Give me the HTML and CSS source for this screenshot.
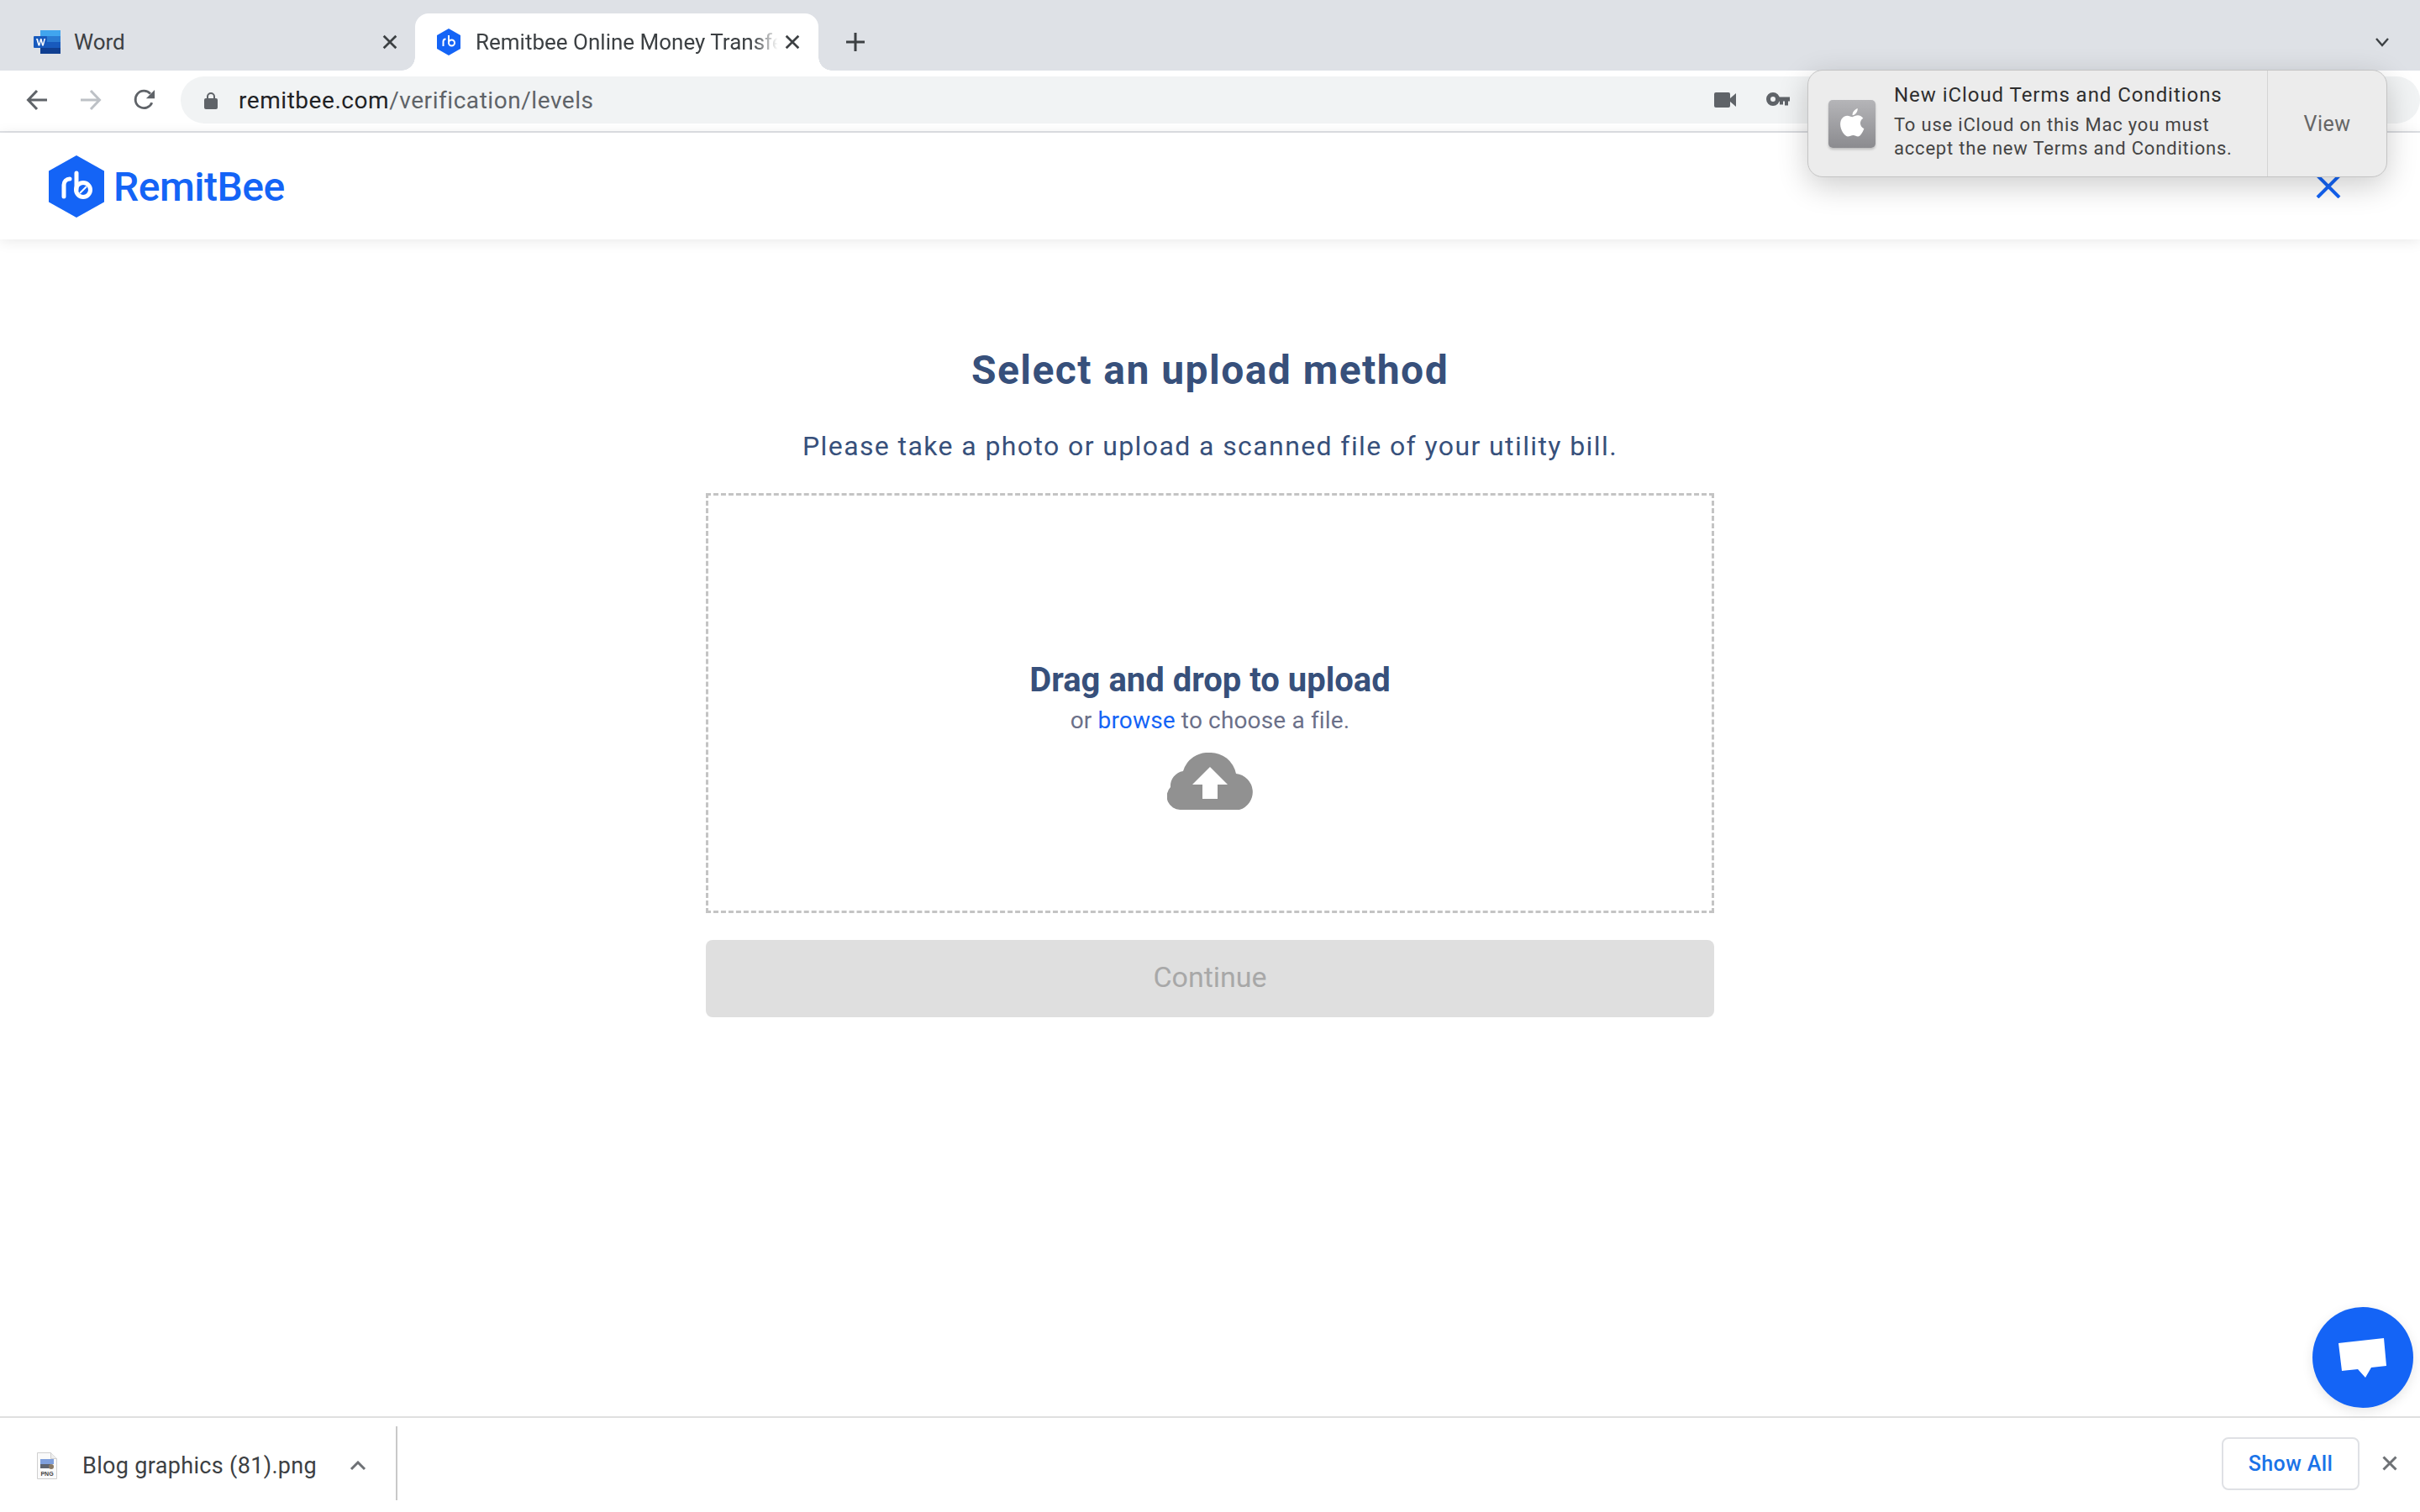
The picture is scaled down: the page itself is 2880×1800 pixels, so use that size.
FILE: index.html
```html
<!DOCTYPE html>
<html lang="en">
<head>
<meta charset="utf-8">
<title>Remitbee</title>
<link rel="stylesheet" href="styles.css">
</head>
<body>
<div class="tabstrip">
  <div class="tab inactive">
    <svg class="favicon word" viewBox="0 0 32 28"><rect x="8" width="24" height="7" fill="#41a5ee"/><rect x="8" y="7" width="24" height="7" fill="#2b7cd3"/><rect x="8" y="14" width="24" height="7" fill="#185abd"/><rect x="8" y="21" width="24" height="7" fill="#103f91"/><rect y="7" width="16" height="14" rx="1" fill="#185abd"/><path d="M3 10h2l1.500 6 1.500-6h1.500l1.500 6 1.500-6h1.500l-2.200 8.500h-1.700l-1.400-5.500-1.400 5.500h-1.700z" fill="#fff"/></svg>
    <span class="tab-title">Word</span>
    <svg class="tab-x" viewBox="0 0 16 16"><path d="M1.500 1.500l13 13M14.500 1.500l-13 13" stroke="#3c4043" stroke-width="2.400" fill="none"/></svg>
  </div>
  <div class="tab active">
    <svg class="favicon rb" viewBox="0 0 28 32"><path d="M14 0l14 8v16l-14 8L0 24V8z" fill="#1464f6"/><path d="M7.500 21v-5.500a3 3 0 0 1 3-3" stroke="#fff" stroke-width="2" fill="none"/><path d="M14 8v9" stroke="#fff" stroke-width="2" fill="none"/><circle cx="17.500" cy="17" r="3.500" stroke="#fff" stroke-width="2" fill="none"/></svg>
    <span class="tab-title fade">Remitbee Online Money Transfe</span>
    <svg class="tab-x" viewBox="0 0 16 16"><path d="M1.500 1.500l13 13M14.500 1.500l-13 13" stroke="#3c4043" stroke-width="2.400" fill="none"/></svg>
  </div>
  <svg class="plus" viewBox="0 0 24 24"><path d="M12 1v22M1 12h22" stroke="#3c4043" stroke-width="3" fill="none"/></svg>
  <svg class="tab-menu" viewBox="0 0 18 12"><path d="M2 2l7 8 7-8" stroke="#3c4043" stroke-width="2.400" fill="none"/></svg>
</div>

<div class="toolbar">
  <svg class="nav" viewBox="0 0 26 26"><path d="M25 13H3M13 2L2.500 13 13 24" stroke="#5f6368" stroke-width="3" fill="none"/></svg>
  <svg class="nav" viewBox="0 0 26 26"><path d="M1 13h22M13 2l10.500 11L13 24" stroke="#bdc1c6" stroke-width="3" fill="none"/></svg>
  <svg class="nav" viewBox="0 0 28 28"><path d="M23.500 17.500A11 11 0 1 1 21.500 6" stroke="#5f6368" stroke-width="3" fill="none"/><path d="M27 1v11H16z" fill="#5f6368"/></svg>
  <div class="omnibox">
    <svg class="lock" viewBox="0 0 16 21"><path d="M4 9V6a4 4 0 0 1 8 0v3" stroke="#5f6368" stroke-width="2" fill="none"/><rect y="8" width="16" height="13" rx="2" fill="#5f6368"/></svg>
    <span class="url"><span class="host">remitbee.com</span>/verification/levels</span>
    <svg class="omni-cam" viewBox="0 0 26 20"><rect y="1" width="19" height="18" rx="2" fill="#5f6368"/><path d="M19 8l7-6v16l-7-6z" fill="#5f6368"/></svg>
    <svg class="omni-key" viewBox="0 0 28 20"><circle cx="8" cy="9" r="5.500" fill="none" stroke="#5f6368" stroke-width="5"/><path d="M13 6.500h15v5h-2v5h-4v-5h-2v4h-4v-4h-3z" fill="#5f6368"/></svg>
  </div>
</div>

<header class="site-header">
  <div class="logo">
    <svg class="logo-mark" viewBox="0 0 66 74"><path d="M33 0l33 18.500v37L33 74 0 55.500v-37z" fill="#1464f6"/><path d="M18 49V35a7 7 0 0 1 7-7" stroke="#fff" stroke-width="5" stroke-linecap="round" fill="none"/><path d="M33 21v20" stroke="#fff" stroke-width="5" stroke-linecap="round" fill="none"/><circle cx="41" cy="41" r="8.500" stroke="#fff" stroke-width="5" fill="none"/><path d="M37 45l8-8" stroke="#fff" stroke-width="2" fill="none"/></svg>
    <span class="logo-text">RemitBee</span>
  </div>
  <svg class="site-close" viewBox="0 0 30 28"><path d="M2 1l26 26M28 1L2 27" stroke="#1464f6" stroke-width="4" fill="none"/></svg>
</header>

<main class="page">
  <h1 class="title">Select an upload method</h1>
  <p class="subtitle">Please take a photo or upload a scanned file of your utility bill.</p>
  <div class="dropzone">
    <div class="drop-title">Drag and drop to upload</div>
    <div class="drop-sub">or <a class="browse">browse</a> to choose a file.</div>
    <svg class="cloud" viewBox="0 0 102 68"><path d="M16 68A16 16 0 0 1 4 41 18 18 0 0 1 19 22 31 31 0 0 1 51 0a31 31 0 0 1 31 25 22 22 0 0 1 4 43z" fill="#919191"/><path d="M51 17l21 21H60v17H42V38H30z" fill="#fff"/></svg>
  </div>
  <button class="continue">Continue</button>
</main>

<footer class="downloads">
  <div class="dl-item">
    <svg class="png" viewBox="0 0 24 32"><path d="M.5.500h16l7 7v24H.5z" fill="#fafafa" stroke="#cfcfcf"/><path d="M16.500.500v7h7" fill="#eee" stroke="#cfcfcf"/><rect x="4" y="8" width="16" height="6" fill="#7f9fdc"/><rect x="4" y="14" width="12" height="5" fill="#5e6470"/><circle cx="17" cy="17" r="3" fill="#8a7a66"/><text x="12" y="28" class="png-label">PNG</text></svg>
    <span class="dl-name">Blog graphics (81).png</span>
    <svg class="dl-chev" viewBox="0 0 20 12"><path d="M2 10l8-8 8 8" stroke="#6e7175" stroke-width="3" fill="none"/></svg>
  </div>
  <button class="show-all">Show All</button>
  <svg class="dl-x" viewBox="0 0 18 18"><path d="M1.500 1.500l15 15M16.500 1.500l-15 15" stroke="#6e7175" stroke-width="3" fill="none"/></svg>
</footer>

<div class="notification">
  <div class="note-body">
    <div class="note-icon">
      <svg viewBox="0 0 28 36"><path d="M14 10c2-1 4-2 6-2 3 0 5 1.500 6.500 3.500-5 3-4 10 1 12-1.500 4-4.500 9-7 9-2 0-3.500-1.300-5.500-1.300S11 32.500 8.500 32.500C5 32.500 0 25 0 18.500 0 12 4 8.500 8 8.500c2.300 0 4.300 1.500 6 1.500z" fill="#fff"/><path d="M14 8c0-4 3-7 6-8 .4 4-2.500 7.700-6 8z" fill="#fff"/></svg>
    </div>
    <div class="note-text">
      <div class="note-title">New iCloud Terms and Conditions</div>
      <div class="note-msg">To use iCloud on this Mac you must<br>accept the new Terms and Conditions.</div>
    </div>
  </div>
  <div class="note-action">View</div>
</div>

<div class="chat">
  <svg viewBox="0 0 60 50"><path d="M1 7l54-6 3 33-18 2-7 12-9-10-19 2z" fill="#fff"/></svg>
</div>
</body>
</html>
```
FILE: styles.css
```css
* { box-sizing: border-box; }
html, body { margin: 0; height: 100%; }
body {
  height: 1800px;
  display: flex;
  flex-direction: column;
  font-family: Roboto, "Liberation Sans", sans-serif;
  background: #fff;
  overflow: hidden;
  position: relative;
}

.tabstrip {
  height: 84px;
  flex: none;
  background: #dee1e6;
  display: flex;
  align-items: flex-end;
  padding-left: 24px;
  position: relative;
}
.tab {
  height: 68px;
  display: flex;
  align-items: center;
  font-size: 26px;
  color: #3c4043;
}
.tab.inactive { width: 470px; padding: 0 21px 0 16px; }
.tab.active {
  width: 480px;
  background: #fff;
  border-radius: 16px 16px 0 0;
  padding: 0 23px 0 26px;
  position: relative;
}
.tab.active::before, .tab.active::after {
  content: "";
  position: absolute;
  bottom: 0;
  width: 16px;
  height: 16px;
  background: radial-gradient(circle at 0 0, #dee1e6 15.500px, #fff 16px);
}
.tab.active::before { left: -16px; }
.tab.active::after { right: -16px; background: radial-gradient(circle at 100% 0, #dee1e6 15.500px, #fff 16px); }
.favicon { flex: none; }
.favicon.word { width: 32px; height: 28px; margin-right: 16px; }
.favicon.rb { width: 28px; height: 32px; margin-right: 18px; }
.tab-title { flex: 1; white-space: nowrap; }
.tab-title.fade {
  -webkit-mask-image: linear-gradient(90deg, #000 90%, transparent 98%);
  mask-image: linear-gradient(90deg, #000 90%, transparent 98%);
}
.tab-x { flex: none; width: 18px; height: 18px; margin-left: 1px; }
.plus { width: 24px; height: 24px; margin: 0 0 22px 32px; flex: none; }
.tab-menu { width: 18px; height: 12px; margin: 0 36px 28px auto; flex: none; }

.toolbar {
  height: 74px;
  flex: none;
  background: #fff;
  border-bottom: 2px solid #dfe1e5;
  display: flex;
  align-items: center;
  padding: 0 0 2px 31px;
}
.nav { width: 26px; height: 26px; flex: none; margin-right: 38px; }
.omnibox {
  flex: 1;
  height: 56px;
  margin-left: -8px;
  background: #f1f3f4;
  border-radius: 28px;
  display: flex;
  align-items: center;
  padding: 0 22px 0 28px;
}
.lock { width: 16px; height: 21px; flex: none; margin-right: 25px; }
.url { font-size: 28px; letter-spacing: .55px; color: #5f6368; white-space: nowrap; flex: 1; }
.host { color: #202124; }
.omni-cam { width: 26px; height: 20px; flex: none; margin-right: 36px; }
.omni-key { width: 28px; height: 20px; flex: none; margin-right: 728px; }

.site-header {
  height: 127px;
  flex: none;
  background: #fff;
  display: flex;
  align-items: center;
  justify-content: space-between;
  padding: 0 94px 0 58px;
  box-shadow: 0 2px 16px rgba(0, 0, 0, .09);
  position: relative;
}
.logo { display: flex; align-items: center; gap: 11px; }
.logo-mark { width: 66px; height: 74px; }
.logo-text { font-size: 48px; font-weight: 500; color: #1464f6; letter-spacing: -.5px; padding-top: 2px; }
.site-close { width: 30px; height: 28px; }

.page {
  flex: 1;
  display: flex;
  flex-direction: column;
  align-items: center;
  padding-top: 122px;
}
.title {
  margin: 0;
  font-size: 48px;
  line-height: 68px;
  font-weight: 700;
  letter-spacing: 1.450px;
  color: #37507b;
}
.subtitle {
  margin: 34px 0 0;
  font-size: 32px;
  line-height: 44px;
  letter-spacing: 1.400px;
  color: #37507b;
}
.dropzone {
  width: 1200px;
  height: 500px;
  margin-top: 34px;
  border: 3px dashed #c4c4c4;
  display: flex;
  flex-direction: column;
  align-items: center;
  padding-top: 194px;
}
.drop-title { font-size: 40px; line-height: 52px; font-weight: 700; color: #37507b; }
.drop-sub { font-size: 28px; line-height: 40px; margin-top: 2px; color: #6b7089; letter-spacing: .15px; }
.browse { color: #1464f6; }
.cloud { width: 102px; height: 68px; margin-top: 18px; }
.continue {
  width: 1200px;
  height: 92px;
  margin-top: 32px;
  padding: 0 0 4px;
  border: 0;
  border-radius: 8px;
  background: #dfdfdf;
  color: #a8a8a8;
  font: 400 34px Roboto, "Liberation Sans", sans-serif;
}

.downloads {
  height: 114px;
  flex: none;
  border-top: 2px solid #dfdfdf;
  display: flex;
  align-items: center;
  background: #fff;
  padding-bottom: 4px;
}
.dl-item {
  width: 473px;
  height: 88px;
  flex: none;
  display: flex;
  align-items: center;
  padding: 6px 0 0 44px;
  border-right: 2px solid #c9c9c9;
}
.png { width: 24px; height: 32px; flex: none; margin-right: 30px; }
.png-label { font: 700 7px "Liberation Sans", sans-serif; text-anchor: middle; fill: #444; }
.dl-name { font-size: 27px; letter-spacing: .33px; color: #3c4043; white-space: nowrap; }
.dl-chev { width: 20px; height: 12px; margin-left: 39px; flex: none; }
.show-all {
  margin-left: auto;
  width: 164px;
  height: 63px;
  background: #fff;
  border: 2px solid #dfe1e5;
  border-radius: 8px;
  color: #1a73e8;
  font: 500 25px Roboto, "Liberation Sans", sans-serif;
  letter-spacing: .4px;
}
.dl-x { width: 18px; height: 18px; flex: none; margin: 0 27px 0 27px; }

.notification {
  position: absolute;
  left: 2151px;
  top: 83px;
  width: 690px;
  height: 128px;
  display: flex;
  background: #ececec;
  border: 1px solid #c4c4c4;
  border-radius: 18px;
  box-shadow: 0 10px 36px rgba(0, 0, 0, .2);
  color: #3a3a3a;
}
.note-body { flex: 1; display: flex; align-items: center; padding-left: 24px; }
.note-icon {
  width: 56px;
  height: 57px;
  flex: none;
  border-radius: 5px;
  background: linear-gradient(#b5b5b8, #8b8b8f);
  box-shadow: 0 2px 3px rgba(0, 0, 0, .2);
  display: flex;
  align-items: center;
  justify-content: center;
  margin-right: 22px;
}
.note-icon svg { width: 29px; height: 37px; }
.note-text { margin-top: -5px; }
.note-title { font-size: 24px; line-height: 30px; font-weight: 400; letter-spacing: .95px; color: #2e2e2e; }
.note-msg { font-size: 22px; line-height: 28px; margin-top: 7px; letter-spacing: .8px; color: #444; }
.note-action {
  width: 142px;
  flex: none;
  border-left: 1px solid #d4d4d4;
  display: flex;
  align-items: center;
  justify-content: center;
  font-size: 25px;
  letter-spacing: .5px;
  color: #666;
}

.chat {
  position: absolute;
  left: 2752px;
  top: 1556px;
  width: 120px;
  height: 120px;
  border-radius: 50%;
  background: #1464f6;
  box-shadow: 0 4px 14px rgba(0, 0, 0, .1);
  display: flex;
  align-items: center;
  justify-content: center;
}
.chat svg { width: 60px; height: 50px; margin-top: 1px; }
```
